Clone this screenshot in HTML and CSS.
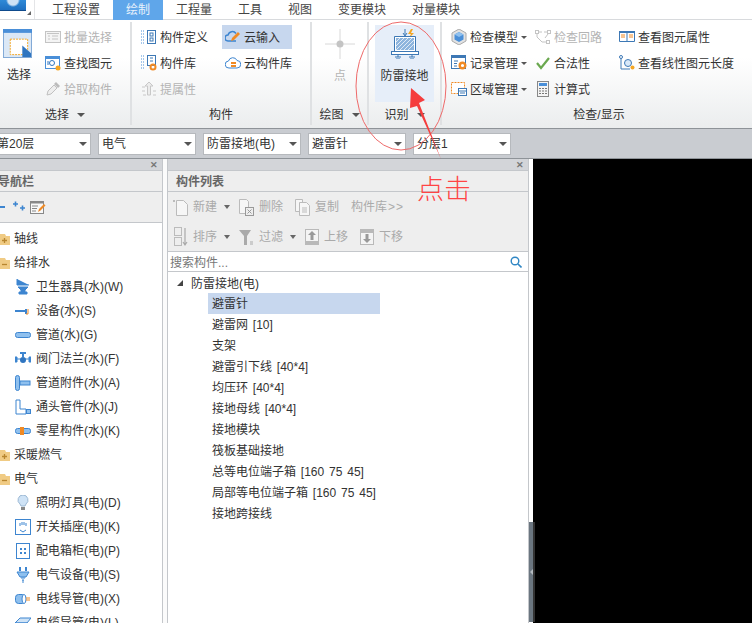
FILE: index.html
```html
<!DOCTYPE html>
<html lang="zh-CN">
  <head>
    <meta charset="UTF-8" />
    <title>防雷接地</title>
    <link rel="stylesheet" href="styles.css">
  </head>
  <body>
    <div class="menubar">
      <div class="logo"><div class="logo-mark"></div><span class="logo-corner"></span></div>
      <div class="tab">工程设置</div>
      <div class="tab active">绘制</div>
      <div class="tab">工程量</div>
      <div class="tab">工具</div>
      <div class="tab">视图</div>
      <div class="tab">变更模块</div>
      <div class="tab">对量模块</div>
    </div>

    <div class="ribbon">
      <!-- 选择 -->
      <div class="group group-select">
        <div class="group-body">
          <div class="big-tool select-tool">
            <svg width="29" height="29" viewBox="0 0 30 30"><rect x="0.5" y="0.5" width="29" height="29" fill="#dbe8f6" stroke="#7fa8d6"/><rect width="30" height="4" fill="#4a8fd8"/><rect x="7.5" y="10.5" width="18" height="16" fill="#fff" stroke="#f5a623" stroke-dasharray="2 1"/><path d="M20 17l9 8v4h-9z" fill="#2f75c0"/></svg>
            <span>选择</span>
          </div>
          <div class="col">
            <div class="tool off"><svg width="16" height="16" viewBox="0 0 16 16"><rect x="0.5" y="2.5" width="15" height="11" fill="#f4f4f4" stroke="#c4c4c4"/><path d="M2 4.500h12M3 7h2M7 7h6M3 10h2M7 10h6" stroke="#c4c4c4"/></svg><span>批量选择</span></div>
            <div class="tool"><svg width="16" height="16" viewBox="0 0 16 16"><rect x="0.5" y="1.5" width="14" height="12" fill="#fff" stroke="#4a8fd8"/><rect y="1" width="15" height="3" fill="#4a8fd8"/><circle cx="7" cy="8" r="2.5" fill="none" stroke="#2f75c0"/><path d="M3 6v4" stroke="#2f75c0"/><circle cx="13" cy="13" r="2.5" fill="#f5a623"/></svg><span>查找图元</span></div>
            <div class="tool off"><svg width="16" height="16" viewBox="0 0 16 16"><path d="M2 14l1-4 6-6 3 3-6 6z" fill="#eee" stroke="#c0c0c0"/><path d="M9 3l2-2 4 4-2 2z" fill="#bbb"/></svg><span>拾取构件</span></div>
          </div>
        </div>
        <div class="group-label">选择<i class="caret"></i></div>
      </div>

      <!-- 构件 -->
      <div class="group group-parts">
        <div class="group-body">
          <div class="col col-wide">
            <div class="tool"><svg width="16" height="16" viewBox="0 0 16 16"><path d="M0 2h4M0 5h4M0 8h4M0 11h4M0 14h4" stroke="#4a8fd8" stroke-dasharray="1 1"/><rect x="6.5" y="1.5" width="8" height="13" fill="#fff" stroke="#3d78b5"/><rect x="9" y="4" width="3" height="3" fill="none" stroke="#3d78b5"/><rect x="9" y="9" width="3" height="3" fill="none" stroke="#3d78b5"/></svg><span>构件定义</span></div>
            <div class="tool"><svg width="16" height="16" viewBox="0 0 16 16"><path d="M0 1h4M0 4h4M0 7h4M0 10h4M0 13h4" stroke="#4a8fd8" stroke-dasharray="1 1"/><rect x="6.5" y="0.5" width="8" height="10" fill="#fff" stroke="#3d78b5"/><path d="M9 3h3M9 6h3" stroke="#3d78b5"/><circle cx="12" cy="12" r="2.5" fill="none" stroke="#f08a24" stroke-width="2"/></svg><span>构件库</span></div>
            <div class="tool off"><svg width="16" height="16" viewBox="0 0 16 16"><path d="M8 1l4 4h-2.500v9h-3v-9h-2.500z" fill="#ececec" stroke="#c8c8c8"/><path d="M1 6h3M1 10h3M12 10h3M12 14h3M2 14h3" stroke="#c8c8c8"/></svg><span>提属性</span></div>
          </div>
          <div class="col">
            <div class="tool on"><svg width="16" height="16" viewBox="0 0 16 16"><path d="M11 4.500a4.500 4.500 0 0 0-8 1.500 3 3 0 0 0 0 6h8" fill="none" stroke="#3d85d0" stroke-width="1.500"/><path d="M6 12l1-3 6-6 2 2-6 6z" fill="#f08a24"/></svg><span>云输入</span></div>
            <div class="tool"><svg width="16" height="16" viewBox="0 0 16 16"><path d="M4 13a3.500 3.500 0 0 1-.5-7 4.500 4.500 0 0 1 8.500-.5 3.700 3.700 0 0 1 0 7.500z" fill="#fff" stroke="#3d85d0"/><path d="M6 8h5M6 11h5" stroke="#f08a24" stroke-width="2"/></svg><span>云构件库</span></div>
          </div>
        </div>
        <div class="group-label">构件</div>
      </div>

      <!-- 绘图 -->
      <div class="group group-draw">
        <div class="group-body">
          <div class="big-tool off">
            <svg width="30" height="30" viewBox="0 0 30 30"><path d="M15 0v30M0 15h30" stroke="#d8d8d8"/><circle cx="15" cy="15" r="3.500" fill="#c4c4c4"/></svg>
            <span>点</span>
          </div>
        </div>
        <div class="group-label">绘图<i class="caret"></i></div>
      </div>

      <!-- 识别 -->
      <div class="group group-detect">
        <div class="group-body">
          <div class="big-tool detect-tool">
            <svg width="30" height="30" viewBox="0 0 30 30"><path d="M15 0v6M13 4l2 3 2-3" fill="none" stroke="#3d78b5"/><path d="M21 0l-3 5h3l-2 4 5-5h-3l2-4z" fill="#f5a623"/><path d="M4.500 7.500h21v15h-21z" fill="#fff" stroke="#3d78b5"/><path d="M6 9h18v12h-18z" fill="#8db4dd"/><path d="M6 13l4-4M6 17l8-8M6 21l12-12M10 21l12-12M14 21l10-10M18 21l6-6" stroke="#dfeaf6"/><rect x="1.500" y="22.500" width="27" height="3" fill="#fff" stroke="#3d78b5"/><path d="M8 26v2M5 28h6M6 30h4M22 26v2M19 28h6M20 30h4" stroke="#3d78b5"/></svg>
            <span>防雷接地</span>
          </div>
        </div>
        <div class="group-label">识别<i class="caret"></i></div>
      </div>

      <!-- 检查/显示 -->
      <div class="group group-check">
        <div class="group-body">
          <div class="col col-check">
            <div class="tool"><svg width="16" height="16" viewBox="0 0 16 16"><path d="M8 0l7 4v8l-7 4-7-4v-8z" fill="#e2e2e2" stroke="#aaa"/><path d="M8 3l4.500 2.500v5l-4.500 2.500-4.500-2.500v-5z" fill="#4a8fd8"/><path d="M3.500 5.500l4.500 2.500 4.500-2.500-4.500-2.500z" fill="#8fc0ee"/></svg><span>检查模型</span><i class="caret"></i></div>
            <div class="tool"><svg width="16" height="16" viewBox="0 0 16 16"><rect x="0.500" y="0.500" width="14" height="13" fill="#fff" stroke="#3d78b5"/><rect width="15" height="3" fill="#3d78b5"/><path d="M3 6h4M3 8.500h3M3 11h3" stroke="#3d78b5"/><circle cx="11.500" cy="10.500" r="2.800" fill="none" stroke="#f08a24" stroke-width="2.400"/></svg><span>记录管理</span><i class="caret"></i></div>
            <div class="tool"><svg width="16" height="16" viewBox="0 0 16 16"><rect x="0.500" y="1.500" width="13" height="11" fill="#fff" stroke="#f08a24" stroke-dasharray="2 1"/><rect x="7.500" y="7.500" width="8" height="7" fill="#fff" stroke="#3d78b5"/><path d="M8 10h7M9 12h5" stroke="#3d78b5"/></svg><span>区域管理</span><i class="caret"></i></div>
          </div>
          <div class="col col-check">
            <div class="tool off"><svg width="16" height="16" viewBox="0 0 16 16"><rect x="0.500" y="1.500" width="3" height="3" fill="#fff" stroke="#c4c4c4"/><rect x="12.500" y="1.500" width="3" height="3" fill="#fff" stroke="#c4c4c4"/><rect x="11.500" y="11.500" width="3" height="3" fill="#fff" stroke="#c4c4c4"/><path d="M4 3h3M9 3h3M2 5v3l5 5h4M13 5l-3 4" fill="none" stroke="#c4c4c4"/></svg><span>检查回路</span></div>
            <div class="tool"><svg width="16" height="16" viewBox="0 0 16 16"><path d="M2 8l4 5 8-10" fill="none" stroke="#6aa84f" stroke-width="2.200"/></svg><span>合法性</span></div>
            <div class="tool"><svg width="16" height="16" viewBox="0 0 16 16"><rect x="2.500" y="0.500" width="11" height="15" fill="#f4f4f4" stroke="#888"/><rect x="4" y="2" width="8" height="3" fill="#4a8fd8"/><path d="M4 7.500h2M7 7.500h2M10 7.500h2M4 10h2M7 10h2M10 10h2M4 12.500h2M7 12.500h2M10 12.500h2" stroke="#777"/></svg><span>计算式</span></div>
          </div>
          <div class="col">
            <div class="tool"><svg width="16" height="16" viewBox="0 0 16 16"><path d="M.5 2.500h15v10h-15z" fill="#fff" stroke="#3d78b5"/><path d="M0 2h16v2h-16zM7.500 3h1v10h-1z" fill="#3d78b5"/><path d="M2 6h4M2 8h4M10 6h4M10 8h4" stroke="#f08a24"/></svg><span>查看图元属性</span></div>
            <div class="tool"><svg width="16" height="16" viewBox="0 0 16 16"><path d="M2 3v11h9" fill="none" stroke="#3d78b5"/><circle cx="2" cy="2" r="1.500" fill="#fff" stroke="#3d78b5"/><circle cx="9" cy="8" r="3.500" fill="#d8e8f8" stroke="#3d78b5"/><circle cx="13.500" cy="12.500" r="2" fill="#f5a623"/></svg><span>查看线性图元长度</span></div>
          </div>
        </div>
        <div class="group-label check-label">检查/显示</div>
      </div>
    </div>

    <div class="selectbar">
      <div class="select first">第20层<i class="caret"></i></div>
      <div class="select">电气<i class="caret"></i></div>
      <div class="select">防雷接地(电)<i class="caret"></i></div>
      <div class="select">避雷针<i class="caret"></i></div>
      <div class="select">分层1<i class="caret"></i></div>
    </div>

    <div class="main">
      <div class="panel nav-panel">
        <div class="panel-top"><span class="close">✕</span></div>
        <div class="panel-title nav-title">导航栏</div>
        <div class="nav-tools">
          <svg width="46" height="16" viewBox="0 0 46 16"><path d="M0 8h5" stroke="#3d85d0" stroke-width="2"/><path d="M13 5h5M15.500 2.500v5M20 9h5M22.500 6.500v5" stroke="#3d85d0" stroke-width="1.600"/><rect x="30.500" y="2.500" width="13" height="12" fill="#f8f8f8" stroke="#888"/><rect x="30" y="2" width="14" height="2.500" fill="#888"/><path d="M32 7h6M32 9.500h5M32 12h4" stroke="#888"/><path d="M38 13l1-3 5-5 1.500 1.500-5 5z" fill="#f08a24"/></svg>
        </div>
        <div class="nav-tree">
          <div class="nav-row folder"><svg width="11" height="12" viewBox="0 0 11 12"><path d="M0 1h6l1 2h4v9h-11z" fill="#f0cb84"/><path d="M3 7.500h5M5.500 5v5" stroke="#b8862f" stroke-width="1.300"/></svg>轴线</div>
          <div class="nav-row folder"><svg width="11" height="12" viewBox="0 0 11 12"><path d="M0 1h6l1 2h4v9h-11z" fill="#f0cb84"/><path d="M3 7.500h5" stroke="#b8862f" stroke-width="1.300"/></svg>给排水</div>
          <div class="nav-row"><svg width="16" height="16" viewBox="0 0 16 16"><path d="M2 0v6h12M3 8h10l-3 3v2h2v2h-8v-2h2v-2z" fill="#3d85d0" stroke="#3d85d0" stroke-width="1"/></svg>卫生器具(水)(W)</div>
          <div class="nav-row"><svg width="16" height="16" viewBox="0 0 16 16"><path d="M0 8h11M11 6v5" stroke="#3d85d0" stroke-width="2"/><path d="M13 6v5h-2" fill="none" stroke="#f08a24"/></svg>设备(水)(S)</div>
          <div class="nav-row"><svg width="16" height="16" viewBox="0 0 16 16"><rect x="0.500" y="5.500" width="15" height="5" rx="2" fill="#8fc0ee" stroke="#3d85d0"/></svg>管道(水)(G)</div>
          <div class="nav-row"><svg width="16" height="16" viewBox="0 0 16 16"><path d="M0 6h2v5h-2zM14 6h2v5h-2zM2 8h12" fill="#3d85d0" stroke="#3d85d0"/><circle cx="8" cy="9" r="3" fill="#2f75c0"/><path d="M8 6v-4M5 2h6" stroke="#3d85d0" stroke-width="2"/></svg>阀门法兰(水)(F)</div>
          <div class="nav-row"><svg width="16" height="16" viewBox="0 0 16 16"><rect x="0.500" y="0.500" width="4" height="15" rx="2" fill="#8fc0ee" stroke="#3d85d0"/><rect x="5" y="6" width="10" height="4" fill="#8fc0ee" stroke="#3d85d0"/></svg>管道附件(水)(A)</div>
          <div class="nav-row"><svg width="16" height="16" viewBox="0 0 16 16"><path d="M1 1h4v9h6v5h-10z" fill="#fff" stroke="#3d85d0"/><rect x="11.500" y="10.500" width="4" height="4" fill="#8fc0ee" stroke="#3d85d0"/></svg>通头管件(水)(J)</div>
          <div class="nav-row"><svg width="16" height="16" viewBox="0 0 16 16"><rect x="0.500" y="5.500" width="15" height="5" rx="2" fill="#8fc0ee" stroke="#3d85d0"/><rect x="5" y="4" width="4" height="8" fill="#f08a24"/></svg>零星构件(水)(K)</div>
          <div class="nav-row folder"><svg width="11" height="12" viewBox="0 0 11 12"><path d="M0 1h6l1 2h4v9h-11z" fill="#f0cb84"/><path d="M3 7.500h5M5.500 5v5" stroke="#b8862f" stroke-width="1.300"/></svg>采暖燃气</div>
          <div class="nav-row folder"><svg width="11" height="12" viewBox="0 0 11 12"><path d="M0 1h6l1 2h4v9h-11z" fill="#f0cb84"/><path d="M3 7.500h5" stroke="#b8862f" stroke-width="1.300"/></svg>电气</div>
          <div class="nav-row"><svg width="16" height="16" viewBox="0 0 16 16"><path d="M8 0a5 5 0 0 1 3 9l-1 2h-4l-1-2a5 5 0 0 1 3-9z" fill="#cfe3f6" stroke="#9db9d4"/><rect x="6" y="12" width="4" height="3" fill="#888"/></svg>照明灯具(电)(D)</div>
          <div class="nav-row"><svg width="16" height="16" viewBox="0 0 16 16"><rect x="0.500" y="0.500" width="15" height="15" fill="#fff" stroke="#3d85d0"/><path d="M5 4v3M7 3v3M9 3v3M11 4v3M5 11l3 2 3-2" fill="none" stroke="#3d85d0"/></svg>开关插座(电)(K)</div>
          <div class="nav-row"><svg width="16" height="16" viewBox="0 0 16 16"><rect x="1.500" y="0.500" width="13" height="15" fill="#fff" stroke="#3d85d0"/><path d="M5 5h2v2h-2zM9 5h2v2h-2zM5 9h2v2h-2zM9 9h2v2h-2z" fill="#3d85d0"/></svg>配电箱柜(电)(P)</div>
          <div class="nav-row"><svg width="16" height="16" viewBox="0 0 16 16"><path d="M5 0v4M11 0v4" stroke="#3d85d0" stroke-width="2"/><path d="M2 5h12l-3 5h-6z" fill="#8fc0ee" stroke="#3d85d0"/><path d="M6 11h4M7 13h2M8 13v3" stroke="#3d85d0"/></svg>电气设备(电)(S)</div>
          <div class="nav-row"><svg width="16" height="16" viewBox="0 0 16 16"><rect x="0.500" y="3.500" width="10" height="9" rx="3" fill="#8fc0ee" stroke="#3d85d0"/><ellipse cx="9" cy="8" rx="2" ry="4.500" fill="#fff" stroke="#3d85d0"/><path d="M11 7h4M11 9h4" stroke="#f08a24"/></svg>电线导管(电)(X)</div>
          <div class="nav-row"><svg width="16" height="16" viewBox="0 0 16 16"><path d="M0 8l5-5h11l-4 5z" fill="#cfe3f6" stroke="#3d85d0"/><path d="M0 8h12v6h-12z" fill="#fff" stroke="#3d85d0"/></svg>电缆导管(电)(L)</div>
        </div>
      </div>

      <div class="gutter"></div>

      <div class="panel list-panel">
        <div class="panel-top"><span class="close">✕</span></div>
        <div class="panel-title">构件列表</div>
        <div class="list-tools">
          <div class="tool-row">
            <div class="ltool"><svg width="15" height="17" viewBox="0 0 15 17"><path d="M3.500 1.500h7l4 4v11h-11z" fill="#f6f6f6" stroke="#bbb"/><path d="M0 1l2 2M2 1l-2 2" stroke="#bbb"/></svg>新建</div><i class="caret"></i>
            <div class="ltool"><svg width="15" height="17" viewBox="0 0 15 17"><path d="M.5 .5h7l2 2v12h-9z" fill="#f6f6f6" stroke="#bbb"/><rect x="6.500" y="8.500" width="8" height="8" fill="#eee" stroke="#999"/><path d="M8.500 10.500l4 4M12.500 10.500l-4 4" stroke="#999"/></svg>删除</div>
            <div class="ltool"><svg width="15" height="17" viewBox="0 0 15 17"><path d="M.5 .5h7v12h-7z" fill="#f6f6f6" stroke="#bbb"/><path d="M4.500 3.500h7l3 3v10h-10z" fill="#f6f6f6" stroke="#bbb"/><path d="M7 9h5M7 11h5M7 13h5" stroke="#bbb"/></svg>复制</div>
            <div class="ltool">构件库<span class="more">&gt;&gt;</span></div>
          </div>
          <div class="tool-row">
            <div class="ltool second"><svg width="14" height="20" viewBox="0 0 14 20"><rect x="0.500" y="0.500" width="7" height="8" fill="none" stroke="#bbb"/><rect x="0.500" y="10.500" width="7" height="8" fill="none" stroke="#bbb"/><path d="M11 1v16M9 15l2 3 2-3" fill="none" stroke="#aaa" stroke-width="1.200"/></svg>排序</div><i class="caret"></i>
            <div class="ltool"><svg width="15" height="15" viewBox="0 0 15 15"><path d="M0 0h12l-4 6v9h-3v-9z" fill="#aaa"/><path d="M11 12h3M11 14h3" stroke="#aaa"/></svg>过滤</div><i class="caret"></i>
            <div class="ltool"><svg width="14" height="16" viewBox="0 0 14 16"><rect width="14" height="16" fill="#b9b9b9"/><rect x="1" y="1" width="12" height="11" fill="#f4f4f4"/><path d="M7 2l4 4h-2.500v5h-3v-5h-2.500z" fill="#999"/></svg>上移</div>
            <div class="ltool"><svg width="14" height="16" viewBox="0 0 14 16"><rect width="14" height="16" fill="#b9b9b9"/><rect x="1" y="4" width="12" height="11" fill="#f4f4f4"/><path d="M7 14l4-4h-2.500v-5h-3v5h-2.500z" fill="#999"/></svg>下移</div>
          </div>
        </div>
        <div class="search">
          <span>搜索构件...</span>
          <svg width="12" height="12" viewBox="0 0 12 12"><circle cx="5" cy="5" r="3.800" fill="none" stroke="#2f86c4" stroke-width="1.400"/><path d="M8 8l3.500 3.500" stroke="#2f86c4" stroke-width="1.600"/></svg>
        </div>
        <div class="tree">
          <div class="tree-root"><i class="tree-arrow"></i><span>防雷接地(电)</span></div>
          <div class="tree-item selected">避雷针</div>
          <div class="tree-item">避雷网 [10]</div>
          <div class="tree-item">支架</div>
          <div class="tree-item">避雷引下线 [40*4]</div>
          <div class="tree-item">均压环 [40*4]</div>
          <div class="tree-item">接地母线 [40*4]</div>
          <div class="tree-item">接地模块</div>
          <div class="tree-item">筏板基础接地</div>
          <div class="tree-item">总等电位端子箱 [160 75 45]</div>
          <div class="tree-item">局部等电位端子箱 [160 75 45]</div>
          <div class="tree-item">接地跨接线</div>
        </div>
      </div>

      <div class="splitter"><div class="splitter-handle"><i></i></div></div>
      <div class="canvas"></div>
    </div>

    <!-- annotation drawn over the screenshot -->
    <svg class="markup" width="752" height="623" viewBox="0 0 752 623">
      <ellipse cx="401" cy="86" rx="45" ry="64" fill="none" stroke="#ee6a6a" stroke-width="1"/>
      <path d="M411 88l14 12-6 3 22 56-24-53-7 2z" fill="#f53d3d"/>
    </svg>
    <div class="note">点击</div>
  </body>
</html>
```

FILE: styles.css
```css
* {
  box-sizing: border-box;
}

html,
body {
  margin: 0;
  padding: 0;
}

body {
  position: relative;
  width: 752px;
  height: 623px;
  overflow: hidden;
  background-color: #fff;
  color: #333;
  font-family: "Liberation Sans", "Noto Sans CJK SC", sans-serif;
  font-size: 12px;
  line-height: 16px;
}

svg {
  display: block;
  flex: none;
}

.caret {
  display: inline-block;
  width: 0;
  height: 0;
  border-left: 4px solid transparent;
  border-right: 4px solid transparent;
  border-top: 4px solid #555;
}

/* top menu */
.menubar {
  display: flex;
  height: 20px;
  border-bottom: 1px solid #d8dadd;
  background-color: #fff;
}

.logo {
  position: relative;
  width: 35px;
  height: 19px;
  margin-right: 4px;
  border-right: 1px solid #e4e5e7;
}

.logo-mark {
  width: 26px;
  height: 11px;
  border-bottom: 1px solid #0f4a8c;
  background: radial-gradient(circle at 50% 0, #cfe2f5 0 5px, transparent 7px), linear-gradient(#2f8ad8, #1f6fc0);
}

.logo-corner {
  position: absolute;
  left: 27px;
  top: 11px;
  width: 0;
  height: 0;
  border-left: 4px solid transparent;
  border-bottom: 4px solid #666;
}

.tab {
  height: 20px;
  padding: 0 13px;
  line-height: 20px;
  color: #444;
}

.tab.active {
  background-color: #5fa6ea;
  color: #e8f2fc;
}

/* ribbon */
.ribbon {
  display: flex;
  height: 108px;
  padding: 2px 0 3px;
  background: linear-gradient(#fff 35%, #ebedee);
}

.group {
  display: flex;
  flex-direction: column;
  flex: none;
  border-right: 2px solid #dfe1e3;
}

.group-body {
  display: flex;
  flex: none;
  height: 80px;
  padding-top: 2px;
}

.group-label {
  display: flex;
  align-items: center;
  justify-content: center;
  gap: 8px;
  height: 23px;
  padding-top: 3px;
  color: #333;
}

.check-label {
  padding-left: 4px;
}

.col {
  display: flex;
  flex-direction: column;
}

.col-wide {
  width: 81px;
}

.tool {
  display: flex;
  align-items: center;
  gap: 3px;
  height: 26px;
  white-space: nowrap;
}

.tool span {
  padding-top: 2px;
}

.tool .caret {
  border-left-width: 3px;
  border-right-width: 3px;
  border-top-width: 3px;
}

.tool.on {
  padding-left: 3px;
  background-color: #c7d7ee;
  background-clip: padding-box;
  border-top: 1px solid transparent;
  border-bottom: 1px solid transparent;
}

.off {
  color: #b4b4b4;
}

.big-tool {
  display: flex;
  flex-direction: column;
  align-items: center;
  gap: 9px;
  margin-top: 1px;
  padding-top: 4px;
}

.group-select {
  width: 132px;
}

.group-select .group-body {
  padding-left: 3px;
}

.select-tool {
  width: 29px;
  margin-right: 13px;
}

.select-tool span {
  margin-left: 3px;
}

.group-parts {
  width: 180px;
}

.group-parts .group-body {
  padding-left: 9px;
}

.group-parts .col:last-child .tool:not(.on) {
  padding-left: 3px;
}

.group-draw {
  width: 57px;
}

.group-draw .group-body {
  justify-content: center;
  padding-left: 1px;
}

.group-detect {
  width: 73px;
}

.group-detect .group-body {
  padding-left: 6px;
}

.detect-tool {
  width: 59px;
  height: 77px;
  background-color: #e6eef9;
}

.group-check {
  flex: 1;
  border-right: 0;
}

.group-check .group-body {
  padding-left: 9px;
}

.col-check {
  width: 84px;
}

/* select row */
.selectbar {
  display: flex;
  gap: 7px;
  height: 30px;
  padding-top: 4px;
  border-top: 1px solid #8e9398;
  background-color: #c9ccd1;
}

.select {
  display: flex;
  align-items: center;
  flex: none;
  width: 98px;
  height: 22px;
  padding-left: 3px;
  border: 1px solid #b6b9bd;
  background-color: #fff;
}

.select.first {
  margin-left: -7px;
}

.select .caret {
  margin-left: auto;
  margin-right: 3px;
}

/* panels */
.main {
  display: flex;
  height: 465px;
  border-top: 1px solid #8e9398;
}

.panel {
  display: flex;
  flex-direction: column;
  flex: none;
  overflow: hidden;
  border-right: 1px solid #c4c7cb;
}

.nav-panel {
  width: 163px;
}

.gutter {
  width: 4px;
  flex: none;
  background-color: #fbfbfb;
}

.list-panel {
  width: 362px;
  border-left: 1px solid #c4c7cb;
}

.panel-top {
  display: flex;
  justify-content: flex-end;
  flex: none;
  height: 11px;
  padding-right: 4px;
  background-color: #d3d5d9;
}

.close {
  font-size: 9px;
  line-height: 12px;
  font-weight: bold;
  color: #777;
}

.panel-title {
  flex: none;
  height: 22px;
  padding-left: 8px;
  border-top: 1px solid #c4c7cb;
  border-bottom: 1px solid #c4c7cb;
  background-color: #eeeeee;
  color: #666;
  font-weight: bold;
  line-height: 22px;
}

.nav-title {
  margin-left: -2px;
  padding-left: 0;
}

.nav-tools {
  display: flex;
  align-items: center;
  flex: none;
  height: 31px;
  border-bottom: 1px solid #c4c7cb;
  background-color: #eeeeee;
}

.nav-tree {
  padding-top: 4px;
}

.nav-row {
  display: flex;
  align-items: center;
  gap: 5px;
  height: 24px;
  padding-left: 15px;
  white-space: nowrap;
}

.nav-row.folder {
  gap: 4px;
  padding-left: 0;
  margin-left: -1px;
}

.list-tools {
  flex: none;
  height: 60px;
  padding-left: 5px;
  border-bottom: 1px solid #c4c7cb;
  background-color: #eeeeee;
  color: #aaa;
}

.tool-row {
  display: flex;
  align-items: center;
  gap: 12px;
  height: 30px;
}

.ltool {
  display: flex;
  align-items: center;
  gap: 5px;
  white-space: nowrap;
}

.ltool.second {
  margin-left: 1px;
}

.more {
  margin-left: -4px;
  letter-spacing: 1px;
}

.list-tools .caret {
  margin-left: -5px;
  margin-right: -3px;
  border-left-width: 3px;
  border-right-width: 3px;
  border-top-color: #666;
}

.search {
  display: flex;
  align-items: center;
  justify-content: space-between;
  flex: none;
  height: 20px;
  padding: 0 6px 0 2px;
  border-bottom: 1px solid #c4c7cb;
  color: #777;
}

.search span {
  padding-top: 2px;
}

.tree {
  flex: 1;
  word-spacing: 1.500px;
}

.tree-root {
  display: flex;
  align-items: center;
  height: 21px;
  padding-left: 9px;
  white-space: nowrap;
}

.tree-root span {
  padding-top: 2px;
}

.tree-arrow {
  width: 0;
  height: 0;
  margin-right: 8px;
  border-left: 6px solid transparent;
  border-bottom: 6px solid #444;
}

.tree-item {
  width: 172px;
  height: 21px;
  margin-left: 40px;
  padding-left: 4px;
  line-height: 23px;
  white-space: nowrap;
}

.tree-item.selected {
  background-color: #c7d7ee;
}

.splitter {
  position: relative;
  z-index: 1;
  display: flex;
  align-items: flex-end;
  flex: none;
  width: 4px;
  background-color: #fff;
}

.splitter-handle {
  display: flex;
  align-items: center;
  justify-content: center;
  flex: none;
  width: 6px;
  height: 100px;
  margin-bottom: 1px;
  border-right: 2px solid #333;
  background-color: #6b7680;
}

.splitter-handle i {
  width: 0;
  height: 0;
  border-top: 3px solid transparent;
  border-bottom: 3px solid transparent;
  border-right: 3px solid #b4bac0;
}

.canvas {
  flex: 1;
  background-color: #000;
}

/* red note drawn on top */
.markup {
  position: absolute;
  left: 0;
  top: 0;
  pointer-events: none;
}

.note {
  position: absolute;
  left: 417px;
  top: 172px;
  color: #f44;
  font-size: 27px;
  line-height: 36px;
  font-weight: 300;
}
```
